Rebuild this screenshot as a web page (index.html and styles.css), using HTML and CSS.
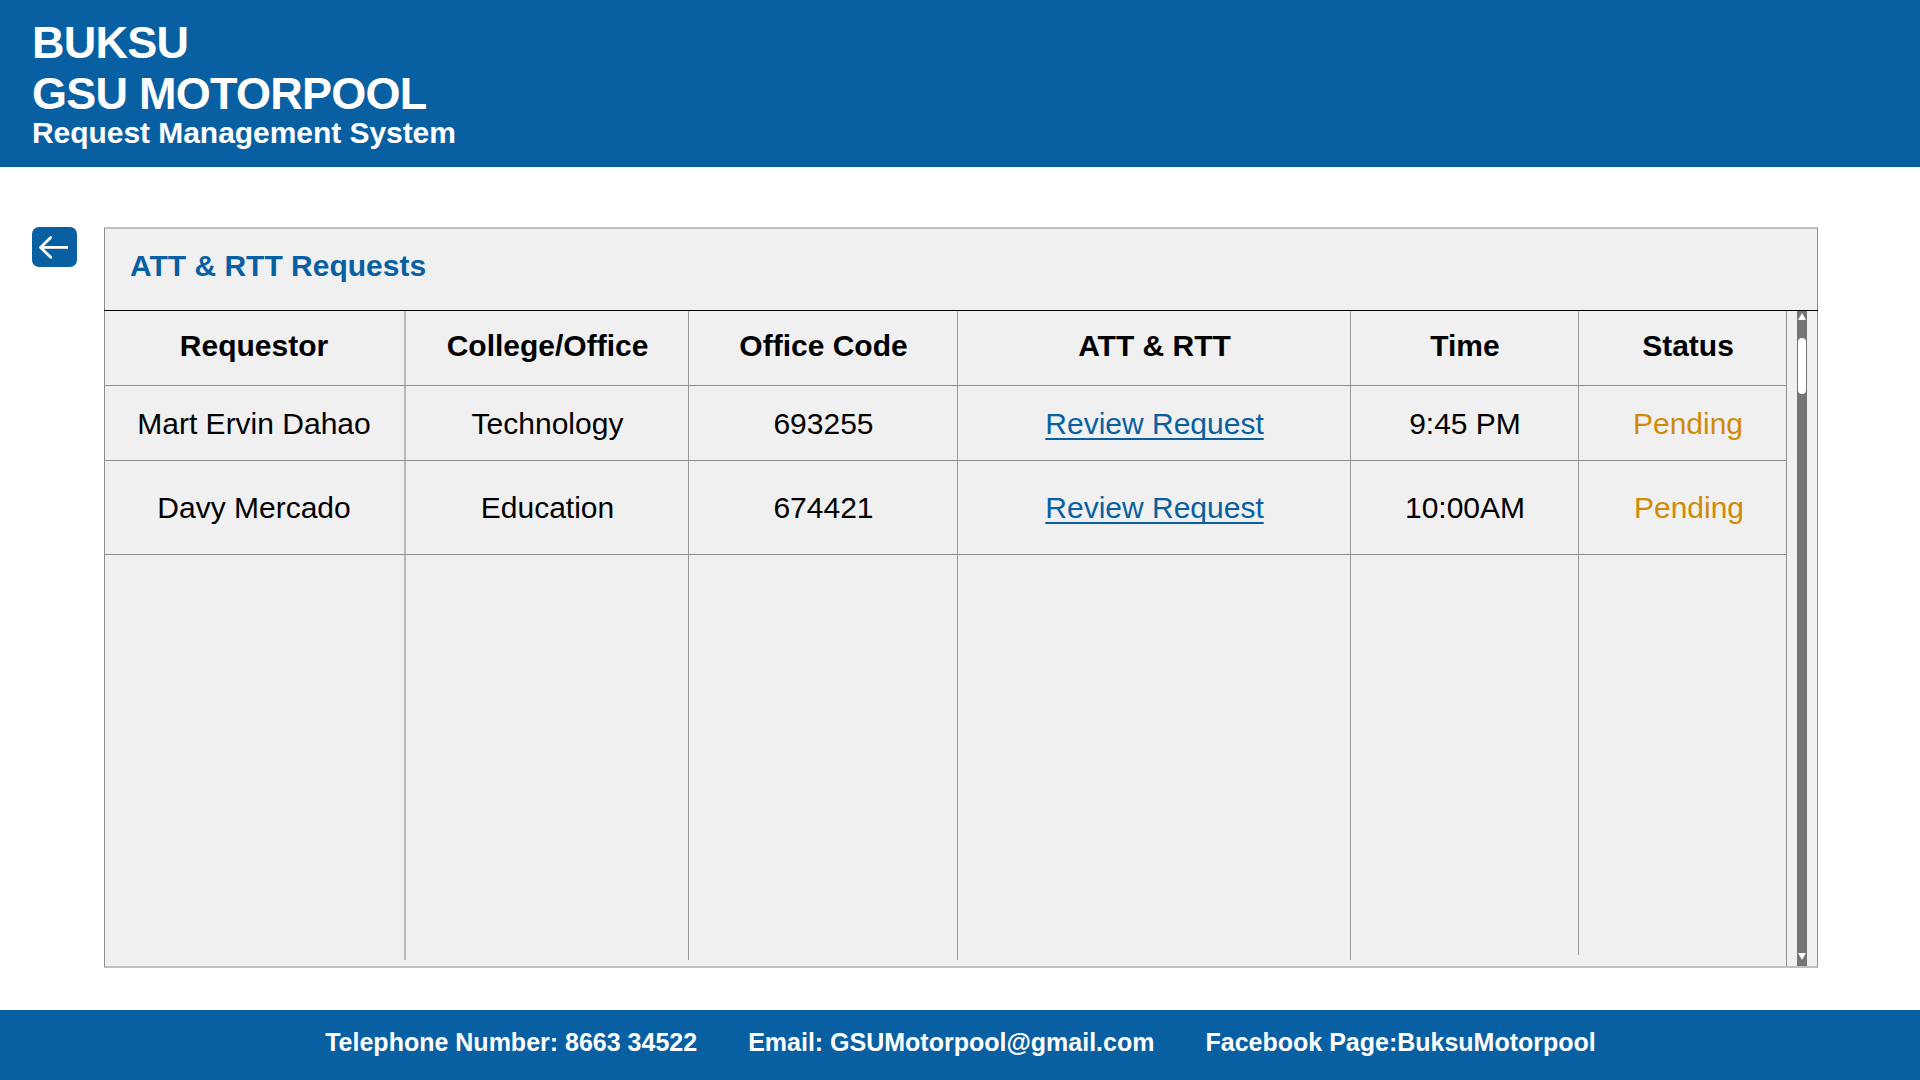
FILE: index.html
```html
<!DOCTYPE html>
<html lang="en">
<head>
<meta charset="utf-8">
<title>BUKSU GSU Motorpool</title>
<link rel="stylesheet" href="styles.css">
</head>
<body>
<header class="header">
  <h1 class="brand"><span class="brand-top">BUKSU</span><br><span class="brand-name">GSU MOTORPOOL</span></h1>
  <p class="tagline"><span>Request Management System</span></p>
</header>
<main class="main">
  <a class="back" href="#" aria-label="Back">
    <svg width="45" height="40" viewBox="0 0 45 40" fill="none" stroke="#fff" stroke-width="2.8" stroke-linecap="round" stroke-linejoin="round"><path d="M18.7 10.6 8.5 20.4 18.7 30.2" /><path d="M8.8 20.4H36" stroke-linecap="butt"/></svg>
  </a>
  <section class="panel">
    <h2 class="panel-title">ATT &amp; RTT Requests</h2>
    <div class="panel-body">
      <div class="table">
        <div class="row row-head">
          <div class="cell">Requestor</div><div class="cell">College/Office</div><div class="cell">Office Code</div><div class="cell">ATT &amp; RTT</div><div class="cell">Time</div><div class="cell">Status</div>
        </div>
        <div class="row row-first">
          <div class="cell">Mart Ervin Dahao</div><div class="cell">Technology</div><div class="cell">693255</div><div class="cell"><a class="review" href="#">Review Request</a></div><div class="cell">9:45 PM</div><div class="cell pending">Pending</div>
        </div>
        <div class="row row-second">
          <div class="cell">Davy Mercado</div><div class="cell">Education</div><div class="cell">674421</div><div class="cell"><a class="review" href="#">Review Request</a></div><div class="cell">10:00AM</div><div class="cell pending">Pending</div>
        </div>
        <div class="row row-empty">
          <div class="cell"></div><div class="cell"></div><div class="cell"></div><div class="cell"></div><div class="cell"></div><div class="cell"></div>
        </div>
      </div>
      <div class="rail">
        <svg class="rail-arrow" width="8" height="7" viewBox="0 0 8 7"><path d="M4 0 8 7H0Z" fill="#fff"/></svg>
        <div class="thumb"></div>
        <svg class="rail-arrow rail-down" width="8" height="7" viewBox="0 0 8 7"><path d="M0 0H8L4 7Z" fill="#fff"/></svg>
      </div>
    </div>
  </section>
</main>
<footer class="footer">
  <span>Telephone Number: 8663 34522</span>
  <span>Email: GSUMotorpool@gmail.com</span>
  <span>Facebook Page:BuksuMotorpool</span>
</footer>
</body>
</html>
```
FILE: styles.css
```css
* { box-sizing: border-box; }
body {
  margin: 0;
  height: 1080px;
  display: flex;
  flex-direction: column;
  background: #fff;
  color: #000;
  font-family: "Liberation Sans", Arial, sans-serif;
  font-size: 30px;
}
.header {
  height: 167px;
  padding: 17px 32px 0;
  background: #0860a2;
  color: #fff;
}
.brand { margin: 0; font-size: 45px; line-height: 51px; font-weight: 700; letter-spacing: -0.75px; }
.tagline { margin: 0; font-size: 30px; line-height: 28px; font-weight: 700; letter-spacing: -0.05px; }
.main {
  height: 843px;
  padding: 60px 102px 42px 32px;
  display: flex;
  align-items: flex-start;
  gap: 27px;
}
.back {
  display: block;
  width: 45px;
  height: 40px;
  border-radius: 7px;
  background: #0860a2;
}
.back svg { display: block; }
.panel {
  width: 1714px;
  height: 741px;
  display: flex;
  flex-direction: column;
  border: solid #c0c0c0;
  border-width: 2px 1px;
  border-left-color: #8e8e8e;
  border-right-color: #8e8e8e;
  background: #f0f0f0;
}
.panel-title {
  margin: 0 -1px;
  height: 82px;
  padding: 19px 0 0 26px;
  border-bottom: 1px solid #000;
  color: #0860a2;
  font-size: 30px;
  line-height: 36px;
}
.panel-body { flex: 1; display: flex; gap: 10px; min-height: 0; }
.table { display: flex; flex-direction: column; width: 1682px; border-right: 1px solid #8e8e8e; }
.row {
  display: grid;
  grid-template-columns: 301px 283px 269px 393px 228px 207px;
  border-bottom: 1px solid #8e8e8e;
}
.cell {
  display: flex;
  align-items: center;
  justify-content: center;
  padding-left: 1px;
  border-right: 1px solid #9a9a9a;
  white-space: nowrap;
}
.cell:first-child { border-right: 2px solid #b9b9b9; padding: 0 1px 0 0; }
.cell:last-child { border-right: 0; padding-left: 11px; }
.row-head { height: 75px; font-weight: 700; }
.row-head .cell { padding-bottom: 4px; }
.row-first { height: 75px; }
.row-first .cell { padding-top: 2px; }
.row-second { height: 94px; }
.row-second .pending { padding-left: 13px; }
.row-empty { height: 405px; border-bottom: 0; }
.row-empty .cell:nth-child(5) { height: 400px; }
.pending { color: #cf8a06; }
.review {
  color: #0860a2;
  text-decoration: underline;
  text-decoration-thickness: 1.5px;
  text-underline-offset: 4px;
  text-decoration-skip-ink: none;
}
.rail {
  display: flex;
  flex-direction: column;
  align-items: center;
  width: 10px;
  padding: 2px 0 6px;
  background: #757575;
}
.thumb { width: 8px; height: 56px; margin-top: 18px; border-radius: 4px; background: #fff; }
.rail-arrow { display: block; flex: none; }
.rail-down { margin-top: auto; }
.footer {
  height: 70px;
  display: flex;
  justify-content: center;
  gap: 51px;
  padding: 18px 0 0 1px;
  background: #0860a2;
  color: #fff;
  font-size: 25px;
  font-weight: 700;
  line-height: 28px;
}
```
